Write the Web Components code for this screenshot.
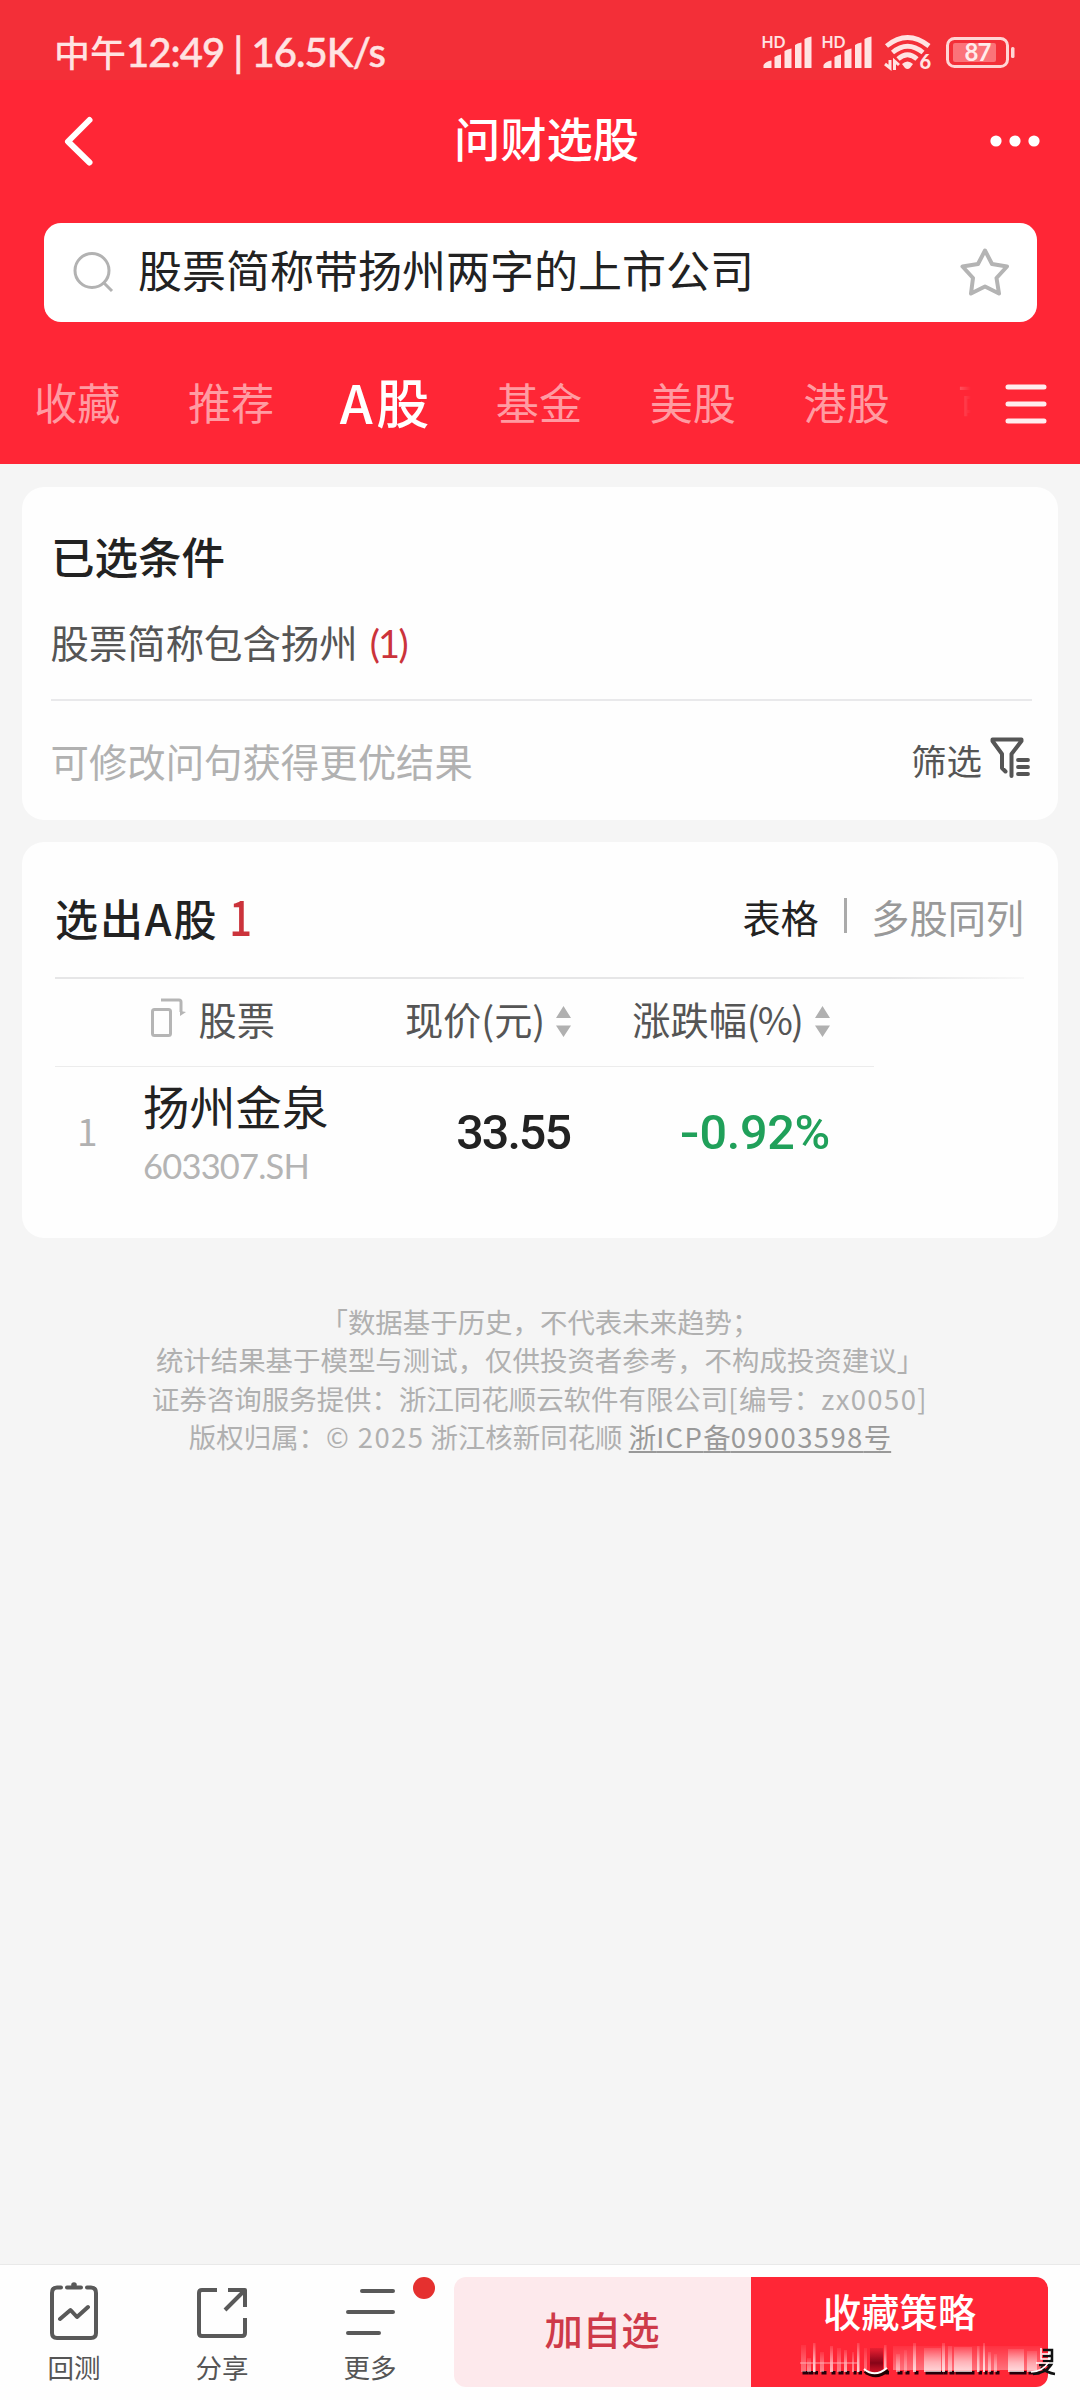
<!DOCTYPE html>
<html lang="zh-CN">
<head>
<meta charset="utf-8">
<title>问财选股</title>
<style>
html,body{margin:0;padding:0}
body{width:1080px;height:2400px;overflow:hidden;background:#f5f5f5;font-family:"Noto Sans CJK SC","Noto Sans",sans-serif;color:#222}
</style>
</head>
<body>
<stock-app></stock-app>
<script>
const define=(name,html)=>customElements.define(name,class extends HTMLElement{
  constructor(){super();this.attachShadow({mode:'open'}).innerHTML=
    '<style>*{box-sizing:border-box}:host{display:block;box-sizing:border-box;white-space:nowrap}svg{display:block;flex:none;overflow:visible}</style>'+html;}
});

define('signal-icon',`<style>:host{width:50px;height:42px}text{font:700 17px Lato,sans-serif}</style>
<svg width="50" height="42" viewBox="0 -4 50 42" fill="#ffe3e2"><text x="-.5" y="13" textLength="24" lengthAdjust="spacingAndGlyphs">HD</text>
<path d="M1.500 33V30Q4 26 9.500 25.500V33Z M12.500 33V22Q15 20 19 19.500V33Z M22.500 33V16Q25 14 29.500 13.500V33Z M33 33V10Q35 8 39.500 7.500V33Z M42.500 33V4Q45 2 49.500 1.500V33Z"/></svg>`);

define('status-bar',`<style>:host{height:80px;background:#f32f38;display:flex;align-items:center;padding:24px 65px 0 54px;color:#ffe3e2}
.t{flex:1;font-size:36px;line-height:48px;height:51px;font-weight:500}.t span{font:500 40px/48px Lato,sans-serif;letter-spacing:-.95px;-webkit-text-stroke:.5px #ffe3e2}
signal-icon{margin-right:10px}.w{margin:1px 13px 0 3px}.b text{font:700 24px Lato,sans-serif}.w text{font:900 20px Lato,sans-serif}</style>
<div class="t">中午<span>12:49 | 16.5K/s</span></div>
<signal-icon></signal-icon><signal-icon></signal-icon>
<svg class="w" width="48" height="42" viewBox="0 -3 48 42" fill="none" stroke="#ffe3e2" stroke-width="4.800"><path d="M1.500 11Q22.500-6 44 11M7.500 17.500Q22.500 5 38 17.500M13 24Q22.500 15.500 32 24"/><path fill="#ffe3e2" stroke="none" d="M17 29Q22.500 24 28 29L25 33Q22.500 35 20 33Z"/><path stroke-width="3" d="M0 29L5 33V25M9.500 35V26L14 30"/><text x="34.500" y="34" fill="#ffe3e2" stroke="none">6</text></svg>
<svg class="b" width="69" height="31" viewBox="0 0 69 31"><rect x="1.500" y="1.500" width="60" height="28" rx="7" fill="none" stroke="#ffd5d4" stroke-width="3"/><rect x="7" y="6" width="43" height="19" rx="2" fill="#fb7379"/><rect x="65" y="10" width="3.500" height="11" rx="1.500" fill="#ffd5d4"/><text x="18.500" y="24" fill="#ffeceb" textLength="27">87</text></svg>`);

define('nav-bar',`<style>:host{height:122px;display:flex;align-items:center;justify-content:space-between;padding:0 40px 0 62px;color:#fff}h1{margin:0 0 9px 7px;font-size:46.300px;font-weight:500;line-height:60px}</style>
<svg width="34" height="52" viewBox="0 0 34 52" fill="none" stroke="#fff" stroke-width="6" stroke-linecap="round" stroke-linejoin="round"><path d="M27.500 5L6 26.500L27.500 47.500"/></svg>
<h1>问财选股</h1>
<svg width="50" height="12" viewBox="0 0 50 12" fill="#fff"><circle cx="6" cy="6" r="5.600"/><circle cx="25" cy="6" r="5.600"/><circle cx="44" cy="6" r="5.600"/></svg>`);

define('search-box',`<style>:host{height:99px;margin:21px 43px 0 44px;background:#fff;border-radius:17px;display:flex;align-items:center;padding:0 27px 0 28px;color:#222}span{flex:1;font-size:44px;line-height:60px;margin:-8px 0 0 24px}svg{margin-top:-1px}</style>
<svg width="42" height="42" viewBox="0 0 42 42" fill="none" stroke="#b2b2b2" stroke-width="3"><circle cx="20" cy="19.500" r="17"/><path d="M31 31L40 40"/></svg>
<span><slot></slot></span>
<svg width="50" height="48" viewBox="0 0 50 48" fill="none" stroke="#b4b4b4" stroke-width="4" stroke-linejoin="round"><path d="M25 2.500L32 16L47 18.500L36.500 30L39 45.500L25 38.500L11 45.500L13 30L2.500 18.500L18 16Z"/></svg>`);

define('tab-strip',`<style>:host{height:142px;display:flex;align-items:center;padding:15px 33px 0 34px;font-size:43.200px;line-height:60px;color:#ff9ba2}
.tabs{display:flex;align-items:center;flex:1;overflow:hidden}.tabs span{width:153.900px;flex:none}.tabs .on{color:#fff;font-size:53px;font-weight:500;width:156px;margin-left:-2px;line-height:74px;letter-spacing:3.500px}.tabs .last{width:14px;overflow:hidden;-webkit-mask-image:linear-gradient(90deg,rgba(0,0,0,.45),transparent);mask-image:linear-gradient(90deg,rgba(0,0,0,.45),transparent)}svg{margin-top:6px}</style>
<div class="tabs"><span>收藏</span><span>推荐</span><span class="on">A股</span><span>基金</span><span>美股</span><span>港股</span><span class="last">可</span></div>
<svg width="42" height="40" viewBox="0 0 42 40" stroke="#ffecee" stroke-width="5" stroke-linecap="round"><path d="M3 3H39M3 20H39M3 37H39"/></svg>`);

define('page-header',`<style>:host{background:#ff2636;height:464px}</style>
<status-bar></status-bar><nav-bar></nav-bar><search-box>股票简称带扬州两字的上市公司</search-box><tab-strip></tab-strip>`);

define('ui-card',`<style>:host{background:#fefefe;border-radius:22px;margin:0 22px}</style><slot></slot>`);

define('condition-panel',`<style>:host{height:333px;padding:0 26px 0 29px;font-size:38.400px;color:#555}
h2{margin:0;padding-top:38px;font-size:43.500px;font-weight:500;line-height:62px;color:#222}
.c{margin:24px 0 0 -.5px;line-height:60px;height:60px}.c b{font:400 38px/50px Lato,sans-serif;color:#cb333b;margin-left:12px;letter-spacing:-1.700px}
.foot{margin-top:28px;border-top:2px solid #e9e9eb;display:flex;align-items:center;color:#b1b1b1;height:120px;padding-right:1px}.foot span{flex:1;margin-left:-.5px}.foot em{font-style:normal;font-size:35.500px;color:#555;margin:-1px 8px 0 0}svg{margin-top:-7px}</style>
<h2>已选条件</h2><div class="c">股票简称包含扬州<b>(1)</b></div>
<div class="foot"><span>可修改问句获得更优结果</span><em>筛选</em>
<svg width="41" height="42" viewBox="0 0 41 42" fill="none" stroke="#555" stroke-width="4" stroke-linecap="round" stroke-linejoin="round"><path d="M15.500 35.500L12 32V18L2.500 5V3.500H31.500V5L21.500 18V40"/><path d="M28 24H38M28 31H38M28 38H38" stroke-width="3.800"/></svg></div>`);

define('sort-arrows',`<style>:host{width:15px}</style><svg width="15" height="31" viewBox="0 0 15 31" fill="#b0b0b0"><path d="M7.500 0L15 12H0ZM7.500 31L0 19.500H15Z"/></svg>`);

define('result-panel',`<style>:host{height:396px;padding:0 34px 0 33px;color:#222}
.head{display:flex;align-items:center;height:135px;padding-top:14px;font-size:38.200px;line-height:60px}
.head h2{margin:0;font-size:43px;font-weight:500;flex:1;letter-spacing:1.900px}.head b{font-weight:500;font-size:47px;color:#cb333b;margin-left:9px;display:inline-block;transform:scaleX(.85);transform-origin:50% 50%}
.head i{width:3.500px;height:35px;background:#aaa;margin:-2px 24px 0 25px}.head u{text-decoration:none;color:#999}
.rule{height:2px;background:linear-gradient(90deg,#e6e6e7 86%,#f4f4f4 97%,#f8f8f8)}
.cols{display:flex;align-items:center;width:819px;height:88px;border-bottom:1px solid #ececec;font-size:38.200px;line-height:60px;color:#555;padding:0 0 7px 96px}
.cols span{margin-left:12.500px}.cols .p{margin-left:130px}.cols .r{margin-left:61px}.cols .r small{font-size:inherit;letter-spacing:-1.900px}.cols sort-arrows{margin-left:11px;margin-top:4px}.cols .s2{margin-left:13px}.cols svg{margin-top:-3px}
.row{display:flex;align-items:center;height:130px}
.n{width:88px;padding-left:22px;font-size:37px;color:#b1b1b1;margin-top:-5px}
.name{width:285px;margin-top:-5px}.name p{margin:0;font-size:46.300px;line-height:64px}.name small{display:block;font:400 34.500px/42px Lato,sans-serif;color:#b4b4b4;margin-top:8px;letter-spacing:-.8px}
.v{font:500 48.500px/60px Roboto,sans-serif;width:142px;text-align:right;letter-spacing:-2px;margin-top:1px}.g{width:260px;color:#20a05a;letter-spacing:-.3px}.g span{display:inline-block;transform:scaleX(1.2);transform-origin:100% 50%}</style>
<div class="head"><h2>选出A股<b>1</b></h2><span>表格</span><i></i><u>多股同列</u></div>
<div class="rule"></div>
<div class="cols"><svg width="35" height="39" viewBox="0 0 35 39" fill="none" stroke="#b5b5b5" stroke-width="3"><rect x="1.500" y="11.500" width="18" height="26" rx="2"/><path d="M10 2H28Q30 2 30 4V14"/><path d="M29 18V13L35 14Z" fill="#b5b5b5" stroke="none"/></svg><span>股票</span><span class="p">现价(元)</span><sort-arrows></sort-arrows><span class="r">涨跌幅<small>(%)</small></span><sort-arrows class="s2"></sort-arrows></div>
<div class="row"><div class="n">1</div><div class="name"><p>扬州金泉</p><small>603307.SH</small></div><div class="v">33.55</div><div class="v g"><span>-</span>0.92%</div></div>`);

define('foot-note',`<style>:host{text-align:center;font-size:27.450px;line-height:38.500px;color:#b0b0b0;padding-top:63.500px;height:1026px}u{color:#999;text-underline-offset:3px;text-decoration-thickness:2px}i{font-style:normal;letter-spacing:1.400px}</style>
<div>「数据基于历史，不代表未来趋势；</div><div>统计结果基于模型与测试，仅供投资者参考，不构成投资建议」</div><div>证券咨询服务提供：浙江同花顺云软件有限公司<i>[</i>编号：<i>zx0050]</i></div><div>版权归属：<i>© 2025</i> 浙江核新同花顺 <u>浙<i>ICP</i>备<i>09003598</i>号</u></div>`);

define('tool-item',`<style>:host{width:148px;display:flex;flex-direction:column;align-items:center;font-size:26.500px;line-height:38px;color:#555;position:relative;padding-top:14px}::slotted(svg){display:block;height:62px;width:62px}span{margin-top:7px}</style><slot name="icon"></slot><span><slot></slot></span>`);

const streaks=[[21,15,5,.35],[27,28,4,.5],[33,13,2.500,.85],[40,22,4,.45],[50,16,3,.7],[57,18,4,.4],[64,20,3,.65],[72,22,2,.5],[77,13,2.500,.8],[84,18,3,.35],[104,15,2.500,.75],[116,24,4,.5],[124,20,3,.35],[133,13,3,.75],[144,18,17,.7],[162,13,3,.8],[168,16,4,.6],[174,17,18,.72],[197,16,2.500,.75],[203,13,2,.85],[208,22,3,.6],[214,24,3,.5],[228,19,16,.75],[247,21,10,.6]];
define('blurred-mark',`<style>:host{width:300px;height:70px}</style>
<svg width="300" height="70" viewBox="0 0 300 70"><defs><linearGradient id="a" x2="0" y2="1"><stop stop-color="#fff" stop-opacity=".15"/><stop offset=".6" stop-color="#fff" stop-opacity=".75"/><stop offset="1" stop-color="#fff"/></linearGradient><linearGradient id="h" x2="0" y2="1"><stop stop-color="#fff" stop-opacity=".05"/><stop offset="1" stop-color="#fff" stop-opacity=".35"/></linearGradient><linearGradient id="d" x2="0" y2="1"><stop stop-color="#7b001b" stop-opacity=".15"/><stop offset=".6" stop-color="#780014" stop-opacity=".9"/><stop offset="1" stop-color="#a00018" stop-opacity=".5"/></linearGradient></defs>
<path d="M113 16H262V40H113Z" fill="url(#h)"/>
${streaks.map(([x,y,w,o])=>`<rect x="${x+1.5}" y="41" width="${w+1}" height="3.500" fill="#26000a"/><rect x="${x}" y="${y}" width="${w}" height="${42-y}" fill="url(#a)" opacity="${o}"/>`).join('')}
<rect x="90" y="18" width="13" height="25" fill="url(#d)"/><path d="M85 41Q96 50 108 40" stroke="#200" stroke-width="4" fill="none"/><path d="M84 39Q95 48 107 38" stroke="#fff" stroke-width="2" fill="none"/>
<path d="M20 33H78" stroke="#ffc0c5" stroke-width="1.500" opacity=".55"/>
<g fill="none" stroke-width="2.500"><path stroke="#111" d="M263 20H272V31H263M263 26H272M259 35H271Q266 43 253 44M261 37Q267 43 275 44"/><path stroke="#fff" stroke-width="1.500" d="M261 18V29H270M262 24H269M256 33H268Q263 41 251 42"/></g></svg>`);

define('action-bar',`<style>:host{height:136px;background:#fefefe;border-top:1px solid #e9e9e9;display:flex;position:relative;font-size:38.300px;line-height:54px}
.dot{position:absolute;left:413px;top:12px;width:22px;height:22px;border-radius:50%;background:#e5302f}
.btn{width:297px;height:110px;margin-top:12px;text-align:center;font-weight:500}
.a{background:#fde9ec;color:#ce3a49;border-radius:12px 0 0 12px;margin-left:10px;padding-top:25px;padding-right:1px}
.b{background:#ff2636;color:#fff;border-radius:0 12px 12px 0;padding-top:7px}
blurred-mark{position:absolute;left:780px;top:65px}</style>
<tool-item><svg slot="icon" viewBox="0 0 62 62" fill="none" stroke="#595959" stroke-width="4" stroke-linecap="round" stroke-linejoin="round"><path d="M18 8.500H14Q9 8.500 9 14V54Q9 59 14 59H48Q53 59 53 54V14Q53 8.500 48 8.500H44M24 8.500H38M17 40L27.500 31L34 38L45 28"/><circle cx="31" cy="6" r="2.800" fill="#595959" stroke="none"/></svg>回测</tool-item>
<tool-item><svg slot="icon" viewBox="0 0 62 62" fill="none" stroke="#595959" stroke-width="4" stroke-linejoin="round"><path d="M26 11H11Q8 11 8 14V54Q8 57 11 57H51Q54 57 54 54V39M37 11H54V28M53 12L34 31"/></svg>分享</tool-item>
<tool-item><svg slot="icon" viewBox="0 0 62 62" fill="none" stroke="#595959" stroke-width="4" stroke-linecap="round"><path d="M23 12H54M9 33H54M9 54H40"/></svg>更多</tool-item>
<i class="dot"></i><div class="btn a">加自选</div><div class="btn b">收藏策略</div><blurred-mark></blurred-mark>`);

define('stock-app',`<style>:host{width:1080px;height:2400px;display:flex;flex-direction:column;background:#f5f5f5}.gap{margin-top:23px}.gap2{margin-top:22px}foot-note{flex:none}</style>
<page-header></page-header>
<ui-card class="gap"><condition-panel></condition-panel></ui-card>
<ui-card class="gap2"><result-panel></result-panel></ui-card>
<foot-note></foot-note><action-bar></action-bar>`);
</script>
</body>
</html>
